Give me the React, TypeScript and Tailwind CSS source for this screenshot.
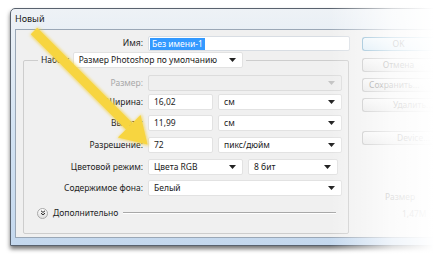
import React from "react";

function Caret() {
  return (
    <svg width="7" height="4" viewBox="0 0 7 4" className="shrink-0">
      <path d="M0 0h7L3.5 4z" fill="#222" />
    </svg>
  );
}

function Select({ value, width, disabled }: { value: string; width: string; disabled?: boolean }) {
  return (
    <div
      className={`flex h-[16px] items-center justify-between rounded-[2px] border pl-[5px] pr-[6px] ${width} ${
        disabled ? "border-[#dcdcdc] bg-[#efefef]" : "border-[#e2e2e2] bg-white"
      }`}
    >
      <span className="whitespace-nowrap text-[#1a1a1a]">{value}</span>
      {disabled ? (
        <svg width="7" height="4" viewBox="0 0 7 4">
          <path d="M0 0h7L3.5 4z" fill="#c4c4c4" />
        </svg>
      ) : (
        <Caret />
      )}
    </div>
  );
}

function Field({ value, width }: { value: string; width: string }) {
  return (
    <div className={`flex h-[16px] items-center rounded-[2px] border border-[#e2e2e2] bg-white pl-[5px] ${width}`}>
      {value}
    </div>
  );
}

function Row({
  label,
  muted,
  className,
  children,
}: {
  label: string;
  muted?: boolean;
  className?: string;
  children: React.ReactNode;
}) {
  return (
    <div className={`flex items-center gap-[5px] ${className ?? ""}`}>
      <span className={`w-[119px] text-right ${muted ? "text-[#a8a8a8]" : "text-[#1e1e1e]"}`}>{label}</span>
      {children}
    </div>
  );
}

function Button({ label, primary, className }: { label: string; primary?: boolean; className?: string }) {
  return (
    <div
      className={`flex h-[14px] w-[72px] items-center justify-center whitespace-nowrap rounded-l-[3px] border border-r-0 text-[#777] ${
        primary
          ? "border-[#7fb0cc] bg-gradient-to-b from-[#eef6fb] to-[#d6e9f5]"
          : "border-[#bdbdbd] bg-gradient-to-b from-[#f6f6f6] to-[#e4e4e4]"
      } ${className ?? ""}`}
    >
      {label}
    </div>
  );
}

// жёлтая стрелка поверх диалога
function Arrow() {
  return (
    <svg className="pointer-events-none absolute left-0 top-0" width="434" height="264" viewBox="0 0 434 264">
      <defs>
        <filter id="glow" x="-20%" y="-20%" width="140%" height="140%">
          <feGaussianBlur stdDeviation="1.6" />
        </filter>
      </defs>
      <g filter="url(#glow)" opacity="0.7" fill="#f3cf3a">
        <polygon points="30,35 38,27 133,122 125,130" />
        <polygon points="141.5,114 117,138.5 149,146" />
      </g>
      <g fill="#f7d540">
        <polygon points="30.8,34.2 37.2,27.8 132.4,123 126,129.4" />
        <polygon points="140.5,114.9 117.9,137.5 147.5,144.5" />
      </g>
    </svg>
  );
}

export default function App() {
  return (
    <div className="relative h-[264px] w-[434px] overflow-hidden bg-white font-['Noto_Sans',sans-serif] text-[8.5px] text-[#1e1e1e]">
      <div className="ml-[10px] mt-[8px] h-[238px] w-[480px] rounded-tl-[5px] border border-[#59626e] bg-gradient-to-b from-[#eef2f6] via-[#d3e3f3] to-[#c4d8ee] shadow-[0_3px_4px_rgba(0,0,0,0.55)]">
        <div className="h-[20px] pl-[4px] pt-[4px] text-[9px] leading-[12px] text-[#1a1a1a]">Новый</div>
        <div className="ml-[4px] flex h-[209px] w-[470px] border border-[#9aa7b6] bg-[#f0f0f0]">
          <div className="w-[335px] pt-[6px]">
            <div className="flex items-center gap-[5px]">
              <span className="w-[127px] text-right">Имя:</span>
              <div className="flex h-[15px] w-[202px] items-center rounded-[2px] border border-[#d8dde3] bg-white pl-[1px]">
                <span className="bg-[#3399ff] px-[2px] leading-[12px] text-white">Без имени-1</span>
              </div>
            </div>
            <fieldset className="ml-[7px] mt-[1px] w-[326px] rounded-[2px] border border-[#cdcdcd] pb-[13px] pr-[6px]">
              <legend className="ml-[14px] flex items-center gap-[3px] px-[3px]">
                <span>Набор:</span>
                <Select value="Размер Photoshop по умолчанию" width="w-[170px]" />
              </legend>
              <div className="flex flex-col pt-[7px]">
                <Row label="Размер:" muted>
                  <Select value="" width="w-[194px]" disabled />
                </Row>
                <Row label="Ширина:" className="mt-[3px]">
                  <Field value="16,02" width="w-[65px]" />
                  <Select value="см" width="w-[124px]" />
                </Row>
                <Row label="Высота:" className="mt-[5px]">
                  <Field value="11,99" width="w-[65px]" />
                  <Select value="см" width="w-[124px]" />
                </Row>
                <Row label="Разрешение:" className="mt-[6px]">
                  <Field value="72" width="w-[65px]" />
                  <Select value="пикс/дюйм" width="w-[124px]" />
                </Row>
                <Row label="Цветовой режим:" className="mt-[6px]">
                  <Select value="Цвета RGB" width="w-[95px]" />
                  <Select value="8 бит" width="w-[90px]" />
                </Row>
                <Row label="Содержимое фона:" className="mt-[5px]">
                  <Select value="Белый" width="w-[194px]" />
                </Row>
                <div className="mt-[11px] flex items-center pl-[13px]">
                  <div className="flex h-[11px] w-[11px] items-center justify-center rounded-full border border-[#a9a9a9] bg-gradient-to-b from-white to-[#dedede]">
                    <svg width="6" height="6" viewBox="0 0 6 6">
                      <path d="M1 0.8l2 1.6 2-1.6M1 3.2l2 1.6 2-1.6" stroke="#222" strokeWidth="1" fill="none" />
                    </svg>
                  </div>
                  <span className="ml-[5px]">Дополнительно</span>
                  <div className="ml-[5px] mr-[6px] h-[2px] flex-1 border-b border-t border-b-white border-t-[#a8a8a8]" />
                </div>
              </div>
            </fieldset>
          </div>
          <div className="ml-[11px] flex flex-col pt-[7px]">
            <Button label="OK" primary />
            <Button label="Отмена" className="mt-[7px]" />
            <Button label="Сохранить..." className="mt-[6px] !justify-start pl-[6px]" />
            <Button label="Удалить..." className="mt-[6px] !justify-start pl-[30px]" />
            <Button label="Device..." className="mt-[19px] !justify-start pl-[34px]" />
            <div className="ml-[23px] mt-[46px] w-[49px] text-[#888]">Размер</div>
            <div className="ml-[40px] mt-[4px] whitespace-nowrap text-[#888]">1,47M</div>
          </div>
        </div>
      </div>
      <div className="pointer-events-none absolute inset-y-0 left-[330px] right-0 bg-gradient-to-r from-white/0 via-white/75 via-60% to-white" />
      <Arrow />
    </div>
  );
}
